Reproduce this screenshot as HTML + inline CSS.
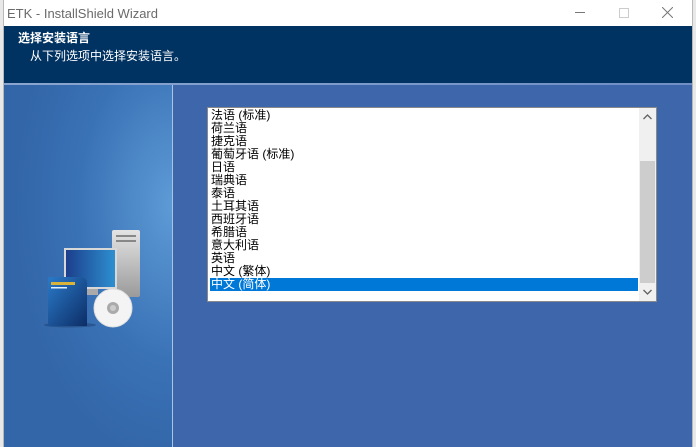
<!DOCTYPE html>
<html><head><meta charset="utf-8"><style>
*{margin:0;padding:0;box-sizing:border-box}
body{width:696px;height:447px;background:#e8e8e8;position:relative;overflow:hidden;font-family:"Liberation Sans","Noto Sans CJK SC",sans-serif}
#win{position:absolute;left:3px;top:0;width:690px;height:447px;background:#3e67ab;border-left:1px solid #b8b8b8;border-right:1px solid #b8b8b8}
#title{position:absolute;left:0;top:0;width:100%;height:26px;background:#fff;font-size:13px;color:#6a6a6a;padding:6px 0 0 3px}
#hdr{position:absolute;left:0;top:26px;width:100%;height:57px;background:#003262}
#hdr .t{position:absolute;left:14px;top:3px;color:#fff;font-size:12px;font-weight:bold}
#hdr .s{position:absolute;left:26px;top:21px;color:#fff;font-size:12px}
#stripe{position:absolute;left:0;top:83px;width:100%;height:2px;background:linear-gradient(90deg,#8aa6d0,#6f8fc6)}
#left{position:absolute;left:0;top:85px;width:169px;height:362px;background:radial-gradient(ellipse 160px 260px at 170px 120px,#5e9bd6,#3a72b6 60%,#3266a8);border-right:1px solid #a9c4e6}
#list{position:absolute;left:203px;top:107px;width:450px;height:195px;background:#fff;border:1px solid #8a8a8a}
#items{position:absolute;left:2px;top:1px;width:428px;font-size:12px;line-height:13px;color:#000}
#items div{height:13px;padding-left:1px;white-space:nowrap}
#items .sel{background:#0078d7;color:#fff}
#sb{position:absolute;right:0;top:0;width:17px;height:193px;background:#f0f0f0}
#thumb{position:absolute;left:1px;top:53px;width:15px;height:122px;background:#cdcdcd}
</style></head><body>
<div id="win">
<div id="title">ETK - InstallShield Wizard
<span style="position:absolute;left:571px;top:12px;width:10px;height:1px;background:#777"></span>
<span style="position:absolute;left:615px;top:8px;width:10px;height:10px;border:1px solid #ccc"></span>
<svg style="position:absolute;left:658px;top:7px" width="11" height="11"><path d="M0 0L11 11M11 0L0 11" stroke="#777" stroke-width="1"/></svg>
</div>
<div id="hdr"><div class="t">选择安装语言</div><div class="s">从下列选项中选择安装语言。</div></div>
<div id="stripe"></div>
<div id="left">
<svg style="position:absolute;left:36px;top:143px" width="110" height="105">
<defs><linearGradient id="g1" x1="0" x2="1"><stop offset="0" stop-color="#1c3f8c"/><stop offset="1" stop-color="#2d8fd0"/></linearGradient>
<linearGradient id="g2" x1="0" y1="0" x2="1" y2="1"><stop offset="0" stop-color="#2a7ac8"/><stop offset="1" stop-color="#0d2d66"/></linearGradient>
<linearGradient id="g3" x1="0" y1="0" x2="0" y2="1"><stop offset="0" stop-color="#e4e4e4"/><stop offset="1" stop-color="#9a9a9a"/></linearGradient></defs>
<ellipse cx="30" cy="97" rx="26" ry="2.5" fill="#1c3d70" opacity=".5"/>
<rect x="72" y="2" width="28" height="67" rx="2" fill="url(#g3)"/><rect x="76" y="7" width="20" height="2" fill="#888"/><rect x="76" y="12" width="20" height="2" fill="#888"/>
<rect x="24" y="20" width="53" height="41" fill="#d8d8d8"/><rect x="26" y="22" width="49" height="37" fill="url(#g1)"/><rect x="44" y="61" width="14" height="6" fill="#aaa"/>
<path d="M8 51Q8 49 10 49L40 49Q47 49 47 56L47 98L8 98Z" fill="url(#g2)"/><rect x="11" y="54" width="24" height="3" fill="#d8b43a"/><rect x="11" y="59" width="16" height="1.5" fill="#e0f0ff"/>
<circle cx="73" cy="80" r="19" fill="#f4f4f4" stroke="#ddd"/><circle cx="73" cy="80" r="6" fill="#aaa"/><circle cx="73" cy="80" r="3" fill="#ccc"/>
</svg>
</div>
<div id="list"><div id="items">
<div>法语 (标准)</div><div>荷兰语</div><div>捷克语</div><div>葡萄牙语 (标准)</div><div>日语</div><div>瑞典语</div><div>泰语</div><div>土耳其语</div><div>西班牙语</div><div>希腊语</div><div>意大利语</div><div>英语</div><div>中文 (繁体)</div><div class="sel">中文 (简体)</div>
</div>
<div id="sb"><div id="thumb"></div>
<svg style="position:absolute;left:4px;top:6px" width="9" height="6"><path d="M0.5 5L4.5 1L8.5 5" stroke="#606060" fill="none" stroke-width="1.3"/></svg>
<svg style="position:absolute;left:4px;top:181px" width="9" height="6"><path d="M0.5 1L4.5 5L8.5 1" stroke="#606060" fill="none" stroke-width="1.3"/></svg>
</div></div>
</div>
</body></html>
